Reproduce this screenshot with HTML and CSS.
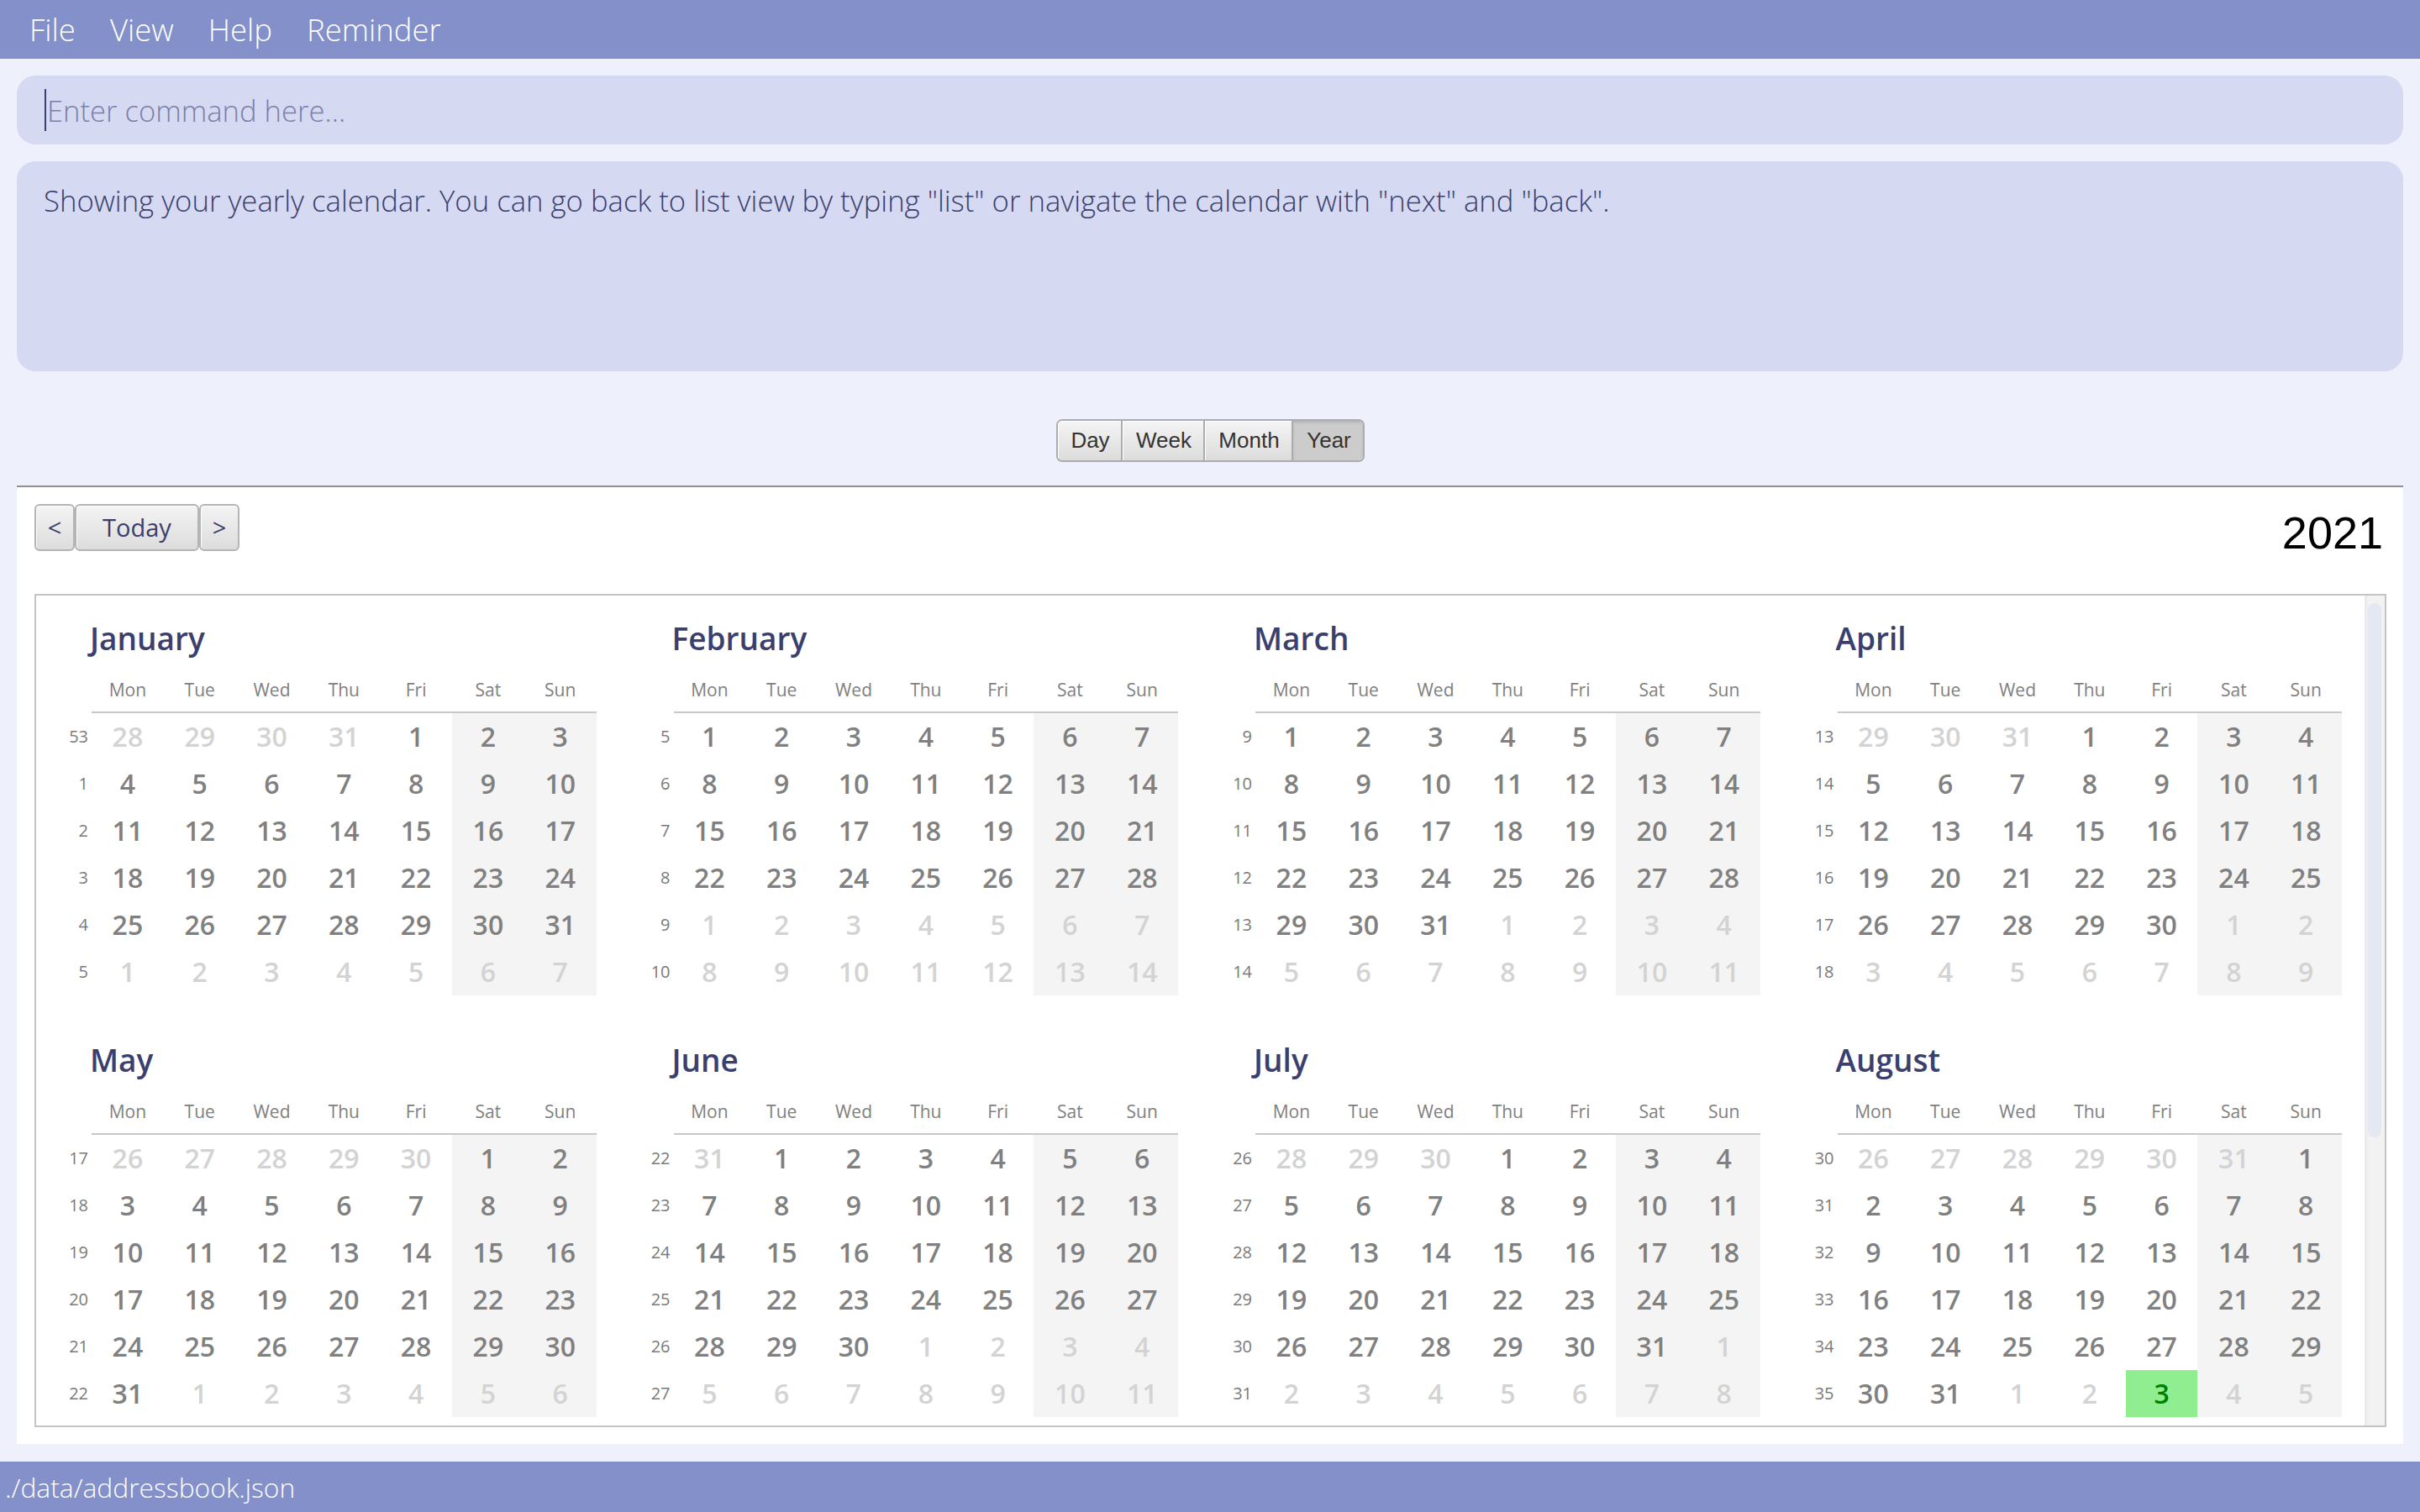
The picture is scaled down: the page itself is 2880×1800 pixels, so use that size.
FILE: index.html
```html
<!DOCTYPE html>
<html lang="en">
<head>
<meta charset="utf-8">
<title>Calendar</title>
<link rel="stylesheet" href="styles.css">
</head>
<body>
<nav class="menubar">
  <span class="menu-item">File</span>
  <span class="menu-item">View</span>
  <span class="menu-item">Help</span>
  <span class="menu-item">Reminder</span>
</nav>

<div class="command">
  <span class="caret"></span>
  <input class="command-input" type="text" placeholder="Enter command here...">
</div>

<div class="result">Showing your yearly calendar. You can go back to list view by typing "list" or navigate the calendar with "next" and "back".</div>

<div class="views">
  <div class="segments">
    <span class="seg seg-day">Day</span>
    <span class="seg seg-week">Week</span>
    <span class="seg seg-month">Month</span>
    <span class="seg seg-year is-selected">Year</span>
  </div>
</div>

<main class="cal-panel">
  <div class="cal-toolbar">
    <div class="nav-group">
      <span class="nav-btn nav-arrow">&lt;</span>
      <span class="nav-btn nav-today">Today</span>
      <span class="nav-btn nav-arrow">&gt;</span>
    </div>
    <div class="year-label">2021</div>
  </div>

  <div class="year-box">
    <div class="year-view">
      <div class="year-grid">

        <section class="month">
          <h2 class="month-name">January</h2>
          <div class="days">
            <span class="h"></span><span class="h">Mon</span><span class="h">Tue</span><span class="h">Wed</span><span class="h">Thu</span><span class="h">Fri</span><span class="h">Sat</span><span class="h">Sun</span>
            <span class="w">53</span><span class="o">28</span><span class="o">29</span><span class="o">30</span><span class="o">31</span><span>1</span><span>2</span><span>3</span>
            <span class="w">1</span><span>4</span><span>5</span><span>6</span><span>7</span><span>8</span><span>9</span><span>10</span>
            <span class="w">2</span><span>11</span><span>12</span><span>13</span><span>14</span><span>15</span><span>16</span><span>17</span>
            <span class="w">3</span><span>18</span><span>19</span><span>20</span><span>21</span><span>22</span><span>23</span><span>24</span>
            <span class="w">4</span><span>25</span><span>26</span><span>27</span><span>28</span><span>29</span><span>30</span><span>31</span>
            <span class="w">5</span><span class="o">1</span><span class="o">2</span><span class="o">3</span><span class="o">4</span><span class="o">5</span><span class="o">6</span><span class="o">7</span>
          </div>
        </section>

        <section class="month">
          <h2 class="month-name">February</h2>
          <div class="days">
            <span class="h"></span><span class="h">Mon</span><span class="h">Tue</span><span class="h">Wed</span><span class="h">Thu</span><span class="h">Fri</span><span class="h">Sat</span><span class="h">Sun</span>
            <span class="w">5</span><span>1</span><span>2</span><span>3</span><span>4</span><span>5</span><span>6</span><span>7</span>
            <span class="w">6</span><span>8</span><span>9</span><span>10</span><span>11</span><span>12</span><span>13</span><span>14</span>
            <span class="w">7</span><span>15</span><span>16</span><span>17</span><span>18</span><span>19</span><span>20</span><span>21</span>
            <span class="w">8</span><span>22</span><span>23</span><span>24</span><span>25</span><span>26</span><span>27</span><span>28</span>
            <span class="w">9</span><span class="o">1</span><span class="o">2</span><span class="o">3</span><span class="o">4</span><span class="o">5</span><span class="o">6</span><span class="o">7</span>
            <span class="w">10</span><span class="o">8</span><span class="o">9</span><span class="o">10</span><span class="o">11</span><span class="o">12</span><span class="o">13</span><span class="o">14</span>
          </div>
        </section>

        <section class="month">
          <h2 class="month-name">March</h2>
          <div class="days">
            <span class="h"></span><span class="h">Mon</span><span class="h">Tue</span><span class="h">Wed</span><span class="h">Thu</span><span class="h">Fri</span><span class="h">Sat</span><span class="h">Sun</span>
            <span class="w">9</span><span>1</span><span>2</span><span>3</span><span>4</span><span>5</span><span>6</span><span>7</span>
            <span class="w">10</span><span>8</span><span>9</span><span>10</span><span>11</span><span>12</span><span>13</span><span>14</span>
            <span class="w">11</span><span>15</span><span>16</span><span>17</span><span>18</span><span>19</span><span>20</span><span>21</span>
            <span class="w">12</span><span>22</span><span>23</span><span>24</span><span>25</span><span>26</span><span>27</span><span>28</span>
            <span class="w">13</span><span>29</span><span>30</span><span>31</span><span class="o">1</span><span class="o">2</span><span class="o">3</span><span class="o">4</span>
            <span class="w">14</span><span class="o">5</span><span class="o">6</span><span class="o">7</span><span class="o">8</span><span class="o">9</span><span class="o">10</span><span class="o">11</span>
          </div>
        </section>

        <section class="month">
          <h2 class="month-name">April</h2>
          <div class="days">
            <span class="h"></span><span class="h">Mon</span><span class="h">Tue</span><span class="h">Wed</span><span class="h">Thu</span><span class="h">Fri</span><span class="h">Sat</span><span class="h">Sun</span>
            <span class="w">13</span><span class="o">29</span><span class="o">30</span><span class="o">31</span><span>1</span><span>2</span><span>3</span><span>4</span>
            <span class="w">14</span><span>5</span><span>6</span><span>7</span><span>8</span><span>9</span><span>10</span><span>11</span>
            <span class="w">15</span><span>12</span><span>13</span><span>14</span><span>15</span><span>16</span><span>17</span><span>18</span>
            <span class="w">16</span><span>19</span><span>20</span><span>21</span><span>22</span><span>23</span><span>24</span><span>25</span>
            <span class="w">17</span><span>26</span><span>27</span><span>28</span><span>29</span><span>30</span><span class="o">1</span><span class="o">2</span>
            <span class="w">18</span><span class="o">3</span><span class="o">4</span><span class="o">5</span><span class="o">6</span><span class="o">7</span><span class="o">8</span><span class="o">9</span>
          </div>
        </section>

        <section class="month">
          <h2 class="month-name">May</h2>
          <div class="days">
            <span class="h"></span><span class="h">Mon</span><span class="h">Tue</span><span class="h">Wed</span><span class="h">Thu</span><span class="h">Fri</span><span class="h">Sat</span><span class="h">Sun</span>
            <span class="w">17</span><span class="o">26</span><span class="o">27</span><span class="o">28</span><span class="o">29</span><span class="o">30</span><span>1</span><span>2</span>
            <span class="w">18</span><span>3</span><span>4</span><span>5</span><span>6</span><span>7</span><span>8</span><span>9</span>
            <span class="w">19</span><span>10</span><span>11</span><span>12</span><span>13</span><span>14</span><span>15</span><span>16</span>
            <span class="w">20</span><span>17</span><span>18</span><span>19</span><span>20</span><span>21</span><span>22</span><span>23</span>
            <span class="w">21</span><span>24</span><span>25</span><span>26</span><span>27</span><span>28</span><span>29</span><span>30</span>
            <span class="w">22</span><span>31</span><span class="o">1</span><span class="o">2</span><span class="o">3</span><span class="o">4</span><span class="o">5</span><span class="o">6</span>
          </div>
        </section>

        <section class="month">
          <h2 class="month-name">June</h2>
          <div class="days">
            <span class="h"></span><span class="h">Mon</span><span class="h">Tue</span><span class="h">Wed</span><span class="h">Thu</span><span class="h">Fri</span><span class="h">Sat</span><span class="h">Sun</span>
            <span class="w">22</span><span class="o">31</span><span>1</span><span>2</span><span>3</span><span>4</span><span>5</span><span>6</span>
            <span class="w">23</span><span>7</span><span>8</span><span>9</span><span>10</span><span>11</span><span>12</span><span>13</span>
            <span class="w">24</span><span>14</span><span>15</span><span>16</span><span>17</span><span>18</span><span>19</span><span>20</span>
            <span class="w">25</span><span>21</span><span>22</span><span>23</span><span>24</span><span>25</span><span>26</span><span>27</span>
            <span class="w">26</span><span>28</span><span>29</span><span>30</span><span class="o">1</span><span class="o">2</span><span class="o">3</span><span class="o">4</span>
            <span class="w">27</span><span class="o">5</span><span class="o">6</span><span class="o">7</span><span class="o">8</span><span class="o">9</span><span class="o">10</span><span class="o">11</span>
          </div>
        </section>

        <section class="month">
          <h2 class="month-name">July</h2>
          <div class="days">
            <span class="h"></span><span class="h">Mon</span><span class="h">Tue</span><span class="h">Wed</span><span class="h">Thu</span><span class="h">Fri</span><span class="h">Sat</span><span class="h">Sun</span>
            <span class="w">26</span><span class="o">28</span><span class="o">29</span><span class="o">30</span><span>1</span><span>2</span><span>3</span><span>4</span>
            <span class="w">27</span><span>5</span><span>6</span><span>7</span><span>8</span><span>9</span><span>10</span><span>11</span>
            <span class="w">28</span><span>12</span><span>13</span><span>14</span><span>15</span><span>16</span><span>17</span><span>18</span>
            <span class="w">29</span><span>19</span><span>20</span><span>21</span><span>22</span><span>23</span><span>24</span><span>25</span>
            <span class="w">30</span><span>26</span><span>27</span><span>28</span><span>29</span><span>30</span><span>31</span><span class="o">1</span>
            <span class="w">31</span><span class="o">2</span><span class="o">3</span><span class="o">4</span><span class="o">5</span><span class="o">6</span><span class="o">7</span><span class="o">8</span>
          </div>
        </section>

        <section class="month">
          <h2 class="month-name">August</h2>
          <div class="days">
            <span class="h"></span><span class="h">Mon</span><span class="h">Tue</span><span class="h">Wed</span><span class="h">Thu</span><span class="h">Fri</span><span class="h">Sat</span><span class="h">Sun</span>
            <span class="w">30</span><span class="o">26</span><span class="o">27</span><span class="o">28</span><span class="o">29</span><span class="o">30</span><span class="o">31</span><span>1</span>
            <span class="w">31</span><span>2</span><span>3</span><span>4</span><span>5</span><span>6</span><span>7</span><span>8</span>
            <span class="w">32</span><span>9</span><span>10</span><span>11</span><span>12</span><span>13</span><span>14</span><span>15</span>
            <span class="w">33</span><span>16</span><span>17</span><span>18</span><span>19</span><span>20</span><span>21</span><span>22</span>
            <span class="w">34</span><span>23</span><span>24</span><span>25</span><span>26</span><span>27</span><span>28</span><span>29</span>
            <span class="w">35</span><span>30</span><span>31</span><span class="o">1</span><span class="o">2</span><span class="today">3</span><span class="o">4</span><span class="o">5</span>
          </div>
        </section>

      </div>
    </div>
    <div class="vscroll"><div class="vthumb"></div></div>
  </div>
</main>

<footer class="statusbar">./data/addressbook.json</footer>
</body>
</html>
```

FILE: styles.css
```css
* { box-sizing: border-box; }

html, body {
  margin: 0;
  padding: 0;
}

body {
  width: 2880px;
  height: 1800px;
  overflow: hidden;
  display: flex;
  flex-direction: column;
  background: #eef1fc;
  font-family: "Open Sans", "Noto Sans", sans-serif;
  color: #3b3f6e;
}

/* ---------- menu bar ---------- */
.menubar {
  flex: 0 0 70px;
  height: 70px;
  background: #8390c9;
  display: flex;
  align-items: center;
  gap: 41px;
  padding-left: 35px;
}

.menu-item {
  color: #ffffff;
  font-size: 36.5px;
  font-weight: 300;
  line-height: 70px;
}

/* ---------- command box ---------- */
.command {
  flex: 0 0 82px;
  height: 82px;
  margin: 20px 20px 0;
  background: #d5d9f2;
  border-radius: 22px;
  display: flex;
  align-items: center;
  padding-left: 33px;
}

.caret {
  flex: 0 0 2px;
  width: 2px;
  height: 50px;
  background: #3b3f6e;
}

.command-input {
  flex: 1;
  border: none;
  outline: none;
  background: transparent;
  font-family: "Open Sans", "Noto Sans", sans-serif;
  font-size: 34.6px;
  font-weight: 300;
  color: #3b3f6e;
  padding: 0 0 0 1px;
  margin: 0;
}

.command-input::placeholder {
  color: #7b80a8;
  opacity: 1;
}

/* ---------- result box ---------- */
.result {
  flex: 0 0 250px;
  height: 250px;
  margin: 20px 20px 0;
  background: #d5d9f2;
  border-radius: 22px;
  padding: 23px 32px 0;
  font-size: 34.7px;
  font-weight: 300;
  color: #3b3f6e;
}

/* ---------- view switch ---------- */
.views {
  flex: 0 0 51px;
  margin-top: 57px;
  display: flex;
  justify-content: center;
}

.segments {
  display: flex;
  height: 51px;
  border: 2px solid #acacac;
  border-radius: 7px;
  overflow: hidden;
  font-family: "Liberation Sans", Arial, sans-serif;
  font-size: 26px;
  color: #333333;
}

.seg {
  height: 47px;
  line-height: 47px;
  text-align: center;
  padding-left: 3px;
  background: linear-gradient(#f4f4f4, #dcdcdc);
  border-right: 2px solid #acacac;
  box-shadow: inset 1px 1px 0 #ffffff;
}

.seg-day { width: 77px; }
.seg-week { width: 98px; }
.seg-month { width: 105px; }
.seg-year { width: 83px; border-right: none; }

.seg.is-selected {
  background: #cccccc;
  box-shadow: inset 0 2px 3px rgba(0, 0, 0, 0.12);
}

/* ---------- calendar panel ---------- */
.cal-panel {
  flex: 0 0 1141px;
  height: 1141px;
  margin: 28px 20px 0;
  background: #ffffff;
  border-top: 2px solid #8e8e8e;
  padding: 0 20px 20px 21px;
  display: flex;
  flex-direction: column;
}

.cal-toolbar {
  flex: 0 0 127px;
  height: 127px;
  padding-top: 20px;
  display: flex;
  justify-content: space-between;
  align-items: flex-start;
}

.nav-group {
  display: flex;
}

.nav-btn {
  height: 56px;
  line-height: 52px;
  border: 2px solid #b4b4b4;
  border-radius: 6px;
  background: linear-gradient(#f4f4f4, #dcdcdc);
  box-shadow: inset 1px 1px 0 #ffffff;
  text-align: center;
  color: #3b3f6e;
  font-size: 29px;
}

.nav-arrow { width: 48px; }
.nav-today { width: 148px; }

.year-label {
  font-family: "Liberation Sans", Arial, sans-serif;
  font-size: 54px;
  line-height: 54px;
  color: #000000;
  margin-top: 7px;
  margin-right: 4px;
}

.year-box {
  flex: 0 0 992px;
  height: 992px;
  border: 2px solid #c4c4c4;
  display: flex;
}

.year-view {
  flex: 1;
  overflow: hidden;
}

.vscroll {
  flex: 0 0 24px;
  width: 24px;
  background: #f2f2f2;
  box-shadow: inset 4px 0 4px -3px rgba(0, 0, 0, 0.08);
  padding: 9px 4px 0;
}

.vthumb {
  height: 636px;
  background: #e4e8f2;
  border-radius: 8px;
}

.year-grid {
  display: grid;
  grid-template-columns: repeat(4, 1fr);
  padding-left: 1px;
}

.month {
  padding: 26px 0;
}

.month-name {
  margin: 0 0 21px 63px;
  font-size: 37px;
  font-weight: 600;
  line-height: 50px;
  color: #3b3f6e;
}

.days {
  display: grid;
  grid-template-columns: 65px repeat(7, 85.8px);
  grid-template-rows: 43px repeat(6, 56px);
  color: #808080;
}

.days > span {
  font-size: 32px;
  font-weight: 600;
  line-height: 56px;
  text-align: center;
}

.days > span.h {
  font-size: 21px;
  font-weight: 500;
  line-height: 30px;
  height: 43px;
  padding-bottom: 11px;
  border-bottom: 2px solid #c8c8c8;
}

.days > span.h:first-child {
  border-bottom: none;
}

.days > span.w {
  font-size: 20px;
  font-weight: 500;
  text-align: right;
  padding-right: 4px;
  color: #7a7a7a;
}

.days > span:nth-child(8n+7):not(.h),
.days > span:nth-child(8n):not(.h) {
  background: #f4f4f4;
}

.days > span.o {
  color: #d3d3d3;
}

.days > span.today {
  background: #90ee90;
  color: #008000;
}

/* ---------- status bar ---------- */
.statusbar {
  flex: 0 0 60px;
  height: 60px;
  margin-top: 21px;
  background: #8390c9;
  color: #ffffff;
  font-size: 31.8px;
  font-weight: 300;
  line-height: 58px;
  padding: 2px 0 0 6px;
}
```
